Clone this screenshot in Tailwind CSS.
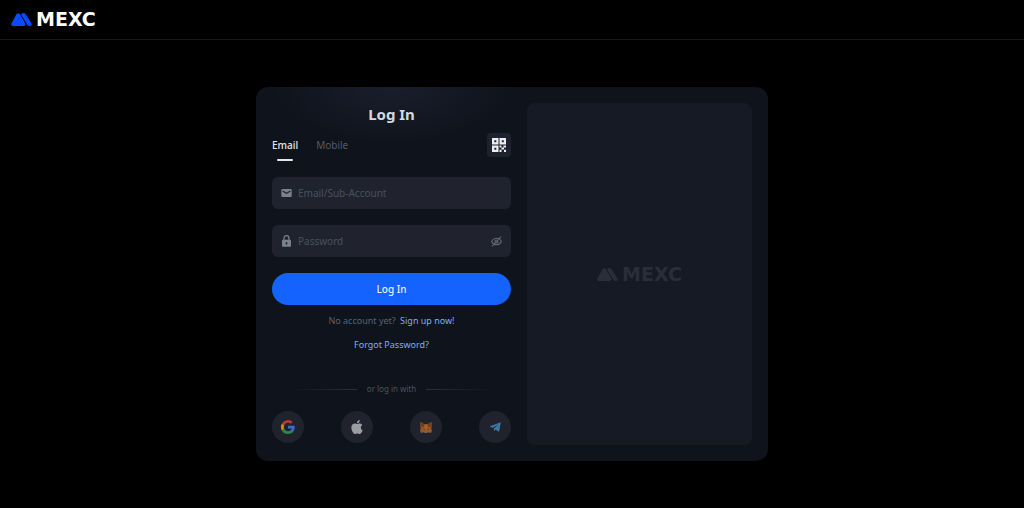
<!DOCTYPE html>
<html lang="en">
  <head>
    <meta charset="UTF-8" />
    <meta name="viewport" content="width=device-width, initial-scale=1.0" />
    <title>Log In | MEXC</title>
    <script src="https://cdn.jsdelivr.net/npm/@tailwindcss/browser@4"></script>
  </head>

  <body class="flex min-h-screen flex-col bg-black font-['Noto_Sans',sans-serif] text-[#d5d8de]">
    <header class="flex h-10 items-center border-b border-[#191919] px-[11px]">
      <a href="#" class="flex items-center gap-1 text-white" aria-label="MEXC home">
        <svg class="h-[13px] w-[21px]" viewBox="0 0 21 13" fill="#0b4bff">
          <path d="M5.400 1.200Q7.200-.8 9 1.200L14.200 10.200Q15.200 12.900 12.600 13H2.200Q-.8 12.600.6 10.200Z" />
          <path d="M10.400 1Q12.400-.9 14.600 1.200L20.400 10.300Q21.400 12.500 19 13Q17.200 13 16.500 12L10.400 2.200Z" />
        </svg>
        <span class="font-['DejaVu_Sans',sans-serif] text-[19px] leading-none font-bold">MEXC</span>
      </a>
    </header>

    <main class="flex grow items-center justify-center p-4">
      <div class="flex w-full max-w-[512px] gap-4 rounded-xl bg-[#0f131b] bg-[radial-gradient(ellipse_120px_58px_at_136px_0px,#191e2d,transparent)] p-4">
        <!-- login form -->
        <form class="min-w-0 flex-1">
          <h1 class="text-center text-[15px] leading-[22px] font-bold">Log In</h1>

          <div class="mt-2 flex items-start justify-between">
            <div class="flex gap-[18px] pt-[2px] text-[10px] leading-5">
              <button type="button" class="flex flex-col items-center gap-1 font-medium text-[#e4e6ea]">
                Email
                <span class="h-[2px] w-4 rounded-full bg-[#e4e6ea]"></span>
              </button>
              <button type="button" class="self-start text-[#545a67]">Mobile</button>
            </div>
            <button type="button" class="flex size-6 items-center justify-center rounded-sm bg-[#1f222e]" aria-label="Log in with QR code">
              <svg class="size-[14px]" viewBox="0 0 14 14" fill="#eceef1">
                <path fill-rule="evenodd" d="M0 0h6.500v6.500H0zM2.300 2.300v2h2v-2zM7.500 0H14v6.500H7.500zM9.800 2.300v2h2v-2zM0 7.500h6.500V14H0zM2.300 9.800v2h2v-2z" />
                <path d="M7.500 7.500h2v2h-2zM11.500 7.500H14v2h-2.500zM9.500 9.500h2.500v2H9.500zM7.500 11.800h2V14h-2zM12 11.800h2V14h-2z" />
              </svg>
            </button>
          </div>

          <label class="mt-4 flex h-8 items-center gap-[6px] rounded-md bg-[#20232e] px-[9px]">
            <svg class="h-3 w-[11px] shrink-0" viewBox="0 0 11 12">
              <rect x=".3" y="2" width="10.4" height="8" rx="1" fill="#7b818d" />
              <path d="M1.500 4 5.500 6.300 9.500 4" fill="none" stroke="#20232e" stroke-width="1.1" />
            </svg>
            <input type="text" aria-label="Email/Sub-Account" placeholder="Email/Sub-Account" class="min-w-0 grow bg-transparent text-[10px] outline-none placeholder:text-[#4a505d]" />
          </label>

          <label class="mt-4 flex h-8 items-center gap-[6px] rounded-md bg-[#20232e] px-[9px]">
            <svg class="h-3 w-[11px] shrink-0" viewBox="0 0 11 12">
              <path d="M3 5.500V3.300Q3 .7 5.500.7T8 3.300V5.500" fill="none" stroke="#7b818d" stroke-width="1.2" />
              <rect x="1" y="4.800" width="9" height="7" rx="1" fill="#7b818d" />
              <path d="M4.700 7.200h1.600v2.300H4.700z" fill="#20232e" />
            </svg>
            <input type="password" aria-label="Password" placeholder="Password" class="min-w-0 grow bg-transparent text-[10px] outline-none placeholder:text-[#4a505d]" />
            <button type="button" aria-label="Show password">
              <svg class="size-[11px]" viewBox="0 0 11 11" fill="none" stroke="#5f6572" stroke-width="1.1">
                <path d="M.6 5.500Q2.200 2.200 5.500 2.200T10.400 5.500Q8.800 8.800 5.500 8.800T.6 5.500ZM1 10.300 10 .7" />
                <circle cx="5.5" cy="5.5" r="1.5" />
              </svg>
            </button>
          </label>

          <button type="submit" class="mt-4 h-8 w-full rounded-full bg-[#1463ff] text-[10px] font-medium text-[#e8efff]">Log In</button>

          <p class="mt-2 text-center text-[9px] leading-4 text-[#5c626f]">
            No account yet?
            <a href="#" class="ml-[2px] text-[#83aaf7]">Sign up now!</a>
          </p>
          <p class="mt-2 text-center text-[9px] leading-4">
            <a href="#" class="text-[#83aaf7]">Forgot Password?</a>
          </p>

          <div class="mt-7 flex items-center justify-center gap-[10px] text-[8px] leading-4 text-[#4d525f]">
            <span class="h-px w-[68px] bg-linear-to-r from-transparent to-[#2b2f3b]"></span>
            or log in with
            <span class="h-px w-[68px] bg-linear-to-l from-transparent to-[#2b2f3b]"></span>
          </div>

          <div class="mt-[14px] mb-[2px] flex justify-between">
            <button type="button" class="flex size-8 items-center justify-center rounded-full bg-[#20232e]" aria-label="Google">
              <svg class="size-[14px] opacity-75" viewBox="0 0 24 24">
                <path fill="#4285f4" d="M23.500 12.300c0-.8-.1-1.600-.2-2.300H12v4.500h6.500a5.500 5.500 0 0 1-2.400 3.600v3h3.900c2.200-2.100 3.500-5.100 3.500-8.800z" />
                <path fill="#34a853" d="M12 24c3.200 0 6-1.100 8-2.900l-3.900-3a7.200 7.200 0 0 1-10.800-3.800h-4v3.100A12 12 0 0 0 12 24z" />
                <path fill="#fbbc05" d="M5.300 14.300a7.200 7.200 0 0 1 0-4.600V6.600h-4a12 12 0 0 0 0 10.800z" />
                <path fill="#ea4335" d="M12 4.800c1.800 0 3.400.6 4.600 1.800L20 3.200A12 12 0 0 0 1.300 6.600l4 3.100A7.200 7.200 0 0 1 12 4.800z" />
              </svg>
            </button>
            <button type="button" class="flex size-8 items-center justify-center rounded-full bg-[#20232e]" aria-label="Apple">
              <svg class="size-[14px]" viewBox="0 0 24 24" fill="#9b9da3">
                <path d="M12.200 6.900c-1 0-2.400-1.100-4-1C6.200 5.900 4.300 7.100 3.300 8.900c-2.100 3.700-.5 9.100 1.500 12.100 1 1.500 2.200 3.100 3.800 3 1.500-.1 2.100-1 3.900-1s2.300 1 3.900 1c1.600 0 2.700-1.500 3.700-2.900 1.100-1.700 1.600-3.300 1.600-3.400 0 0-3.100-1.200-3.200-4.800 0-3 2.500-4.400 2.600-4.500-1.400-2.100-3.600-2.300-4.400-2.400-2-.2-3.700 1.100-4.500.9zM15.500 3.800c.8-1 1.400-2.400 1.200-3.800-1.200.1-2.700.8-3.500 1.800-.8.900-1.500 2.300-1.300 3.700 1.400.1 2.800-.7 3.600-1.700z" />
              </svg>
            </button>
            <button type="button" class="flex size-8 items-center justify-center rounded-full bg-[#20232e]" aria-label="MetaMask">
              <svg class="h-[11px] w-3" viewBox="0 0 24 22">
                <path fill="#9a5722" d="M1 0 9 4.500h6L23 0l.5 8-1 5L24 17.500 22 22l-6-1.500-2 1.500h-4l-2-1.500L2 22 0 17.500 1.500 13l-1-5Z" />
                <path fill="#6b3f22" d="M1 0 9.500 6.500 8 10 1.500 9ZM23 0 14.500 6.500 16 10l6.500-1Z" />
                <path fill="#a85f22" d="M9 5h6l1 6-2 6h-4l-2-6Z" />
                <path fill="#30323b" d="m6 13 3.500.8L9 16ZM18 13l-3.500.8L15 16Z" />
                <path fill="#68676c" d="m8 19 2.500-1.500h3L16 19l-2 3h-4Z" />
              </svg>
            </button>
            <button type="button" class="flex size-8 items-center justify-center rounded-full bg-[#20232e]" aria-label="Telegram">
              <svg class="h-[10px] w-[11px]" viewBox="0 0 22 20" fill="#3f76a3">
                <path d="M21.500.5 18.500 18q-.4 1.700-2 .8L11 15l-2.700 3.500L7.500 13 17 4.500 5.500 11.500.7 10Q-.5 9 1 8Z" />
              </svg>
            </button>
          </div>
        </form>

        <!-- banner placeholder -->
        <aside class="flex w-[225px] shrink-0 items-center justify-center gap-1 rounded-lg bg-[#161a24] text-[#2a2e38]">
          <svg class="h-[13px] w-[21px]" viewBox="0 0 21 13" fill="currentColor">
            <path d="M5.400 1.200Q7.200-.8 9 1.200L14.200 10.200Q15.200 12.900 12.600 13H2.200Q-.8 12.600.6 10.200Z" />
            <path d="M10.400 1Q12.400-.9 14.600 1.200L20.400 10.300Q21.400 12.500 19 13Q17.200 13 16.500 12L10.400 2.200Z" />
          </svg>
          <span class="font-['DejaVu_Sans',sans-serif] text-[19px] leading-none font-bold">MEXC</span>
        </aside>
      </div>
    </main>
  </body>
</html>
